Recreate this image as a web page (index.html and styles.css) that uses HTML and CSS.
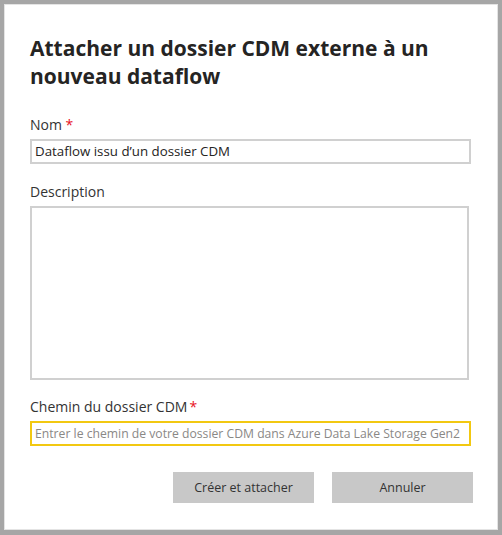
FILE: index.html
```html
<!DOCTYPE html>
<html lang="fr">
<head>
<meta charset="utf-8">
<link rel="stylesheet" href="styles.css">
</head>
<body>
<div class="dialog">
  <h1 class="title">Attacher un dossier CDM externe à un nouveau dataflow</h1>
  <div class="field field-name">
    <label class="label">Nom <span class="req">*</span></label>
    <div class="input">Dataflow issu d’un dossier CDM</div>
  </div>
  <div class="field field-desc">
    <label class="label">Description</label>
    <div class="textarea"></div>
  </div>
  <div class="field field-path">
    <label class="label">Chemin du dossier CDM<span class="req req-tight">*</span></label>
    <div class="input input-focus placeholder">Entrer le chemin de votre dossier CDM dans Azure Data Lake Storage Gen2</div>
  </div>
  <div class="actions">
    <button class="btn">Créer et attacher</button>
    <button class="btn">Annuler</button>
  </div>
</div>
</body>
</html>
```

FILE: styles.css
```css
html, body {
  margin: 0;
  padding: 0;
}
body {
  background: #a6a6a6;
  padding: 4px 4px 5px 4px;
  width: 502px;
  height: 535px;
  box-sizing: border-box;
  font-family: "Open Sans", "Noto Sans", sans-serif;
  color: #333;
}
.dialog {
  background: #fff;
  border: 1px solid #e4e4e4;
  height: 100%;
  box-sizing: border-box;
  padding: 29px 25px 0 25px;
}
.title {
  margin: 0;
  font-size: 21px;
  font-weight: 700;
  line-height: 28px;
  color: #252423;
  width: 440px;
}
.field-name {
  margin-top: 26px;
}
.field-desc {
  margin-top: 19px;
}
.field-path {
  margin-top: 18px;
}
.label {
  display: block;
  font-size: 14px;
  line-height: 18px;
  color: #333;
  margin-bottom: 5px;
}
.req {
  color: #e81123;
}
.req-tight {
  margin-left: 2px;
}
.input {
  width: 441px;
  height: 25px;
  box-sizing: border-box;
  border: 2px solid #d0d0d0;
  font-size: 13.3px;
  line-height: 21px;
  padding: 0 3px;
  color: #252423;
  white-space: nowrap;
  overflow: hidden;
}
.input-focus {
  border-color: #f2c811;
}
.placeholder {
  color: #8a8886;
  font-size: 12.2px;
}
.textarea {
  width: 439px;
  height: 174px;
  box-sizing: border-box;
  border: 2px solid #d0d0d0;
}
.actions {
  display: flex;
  justify-content: flex-end;
  gap: 18px;
  margin-top: 26px;
  width: 443px;
}
.btn {
  width: 141px;
  height: 31px;
  border: none;
  background: #c8c8c8;
  color: #333;
  font-family: "Open Sans", "Noto Sans", sans-serif;
  font-size: 12.5px;
  padding: 0 0 1px 0;
}
```
